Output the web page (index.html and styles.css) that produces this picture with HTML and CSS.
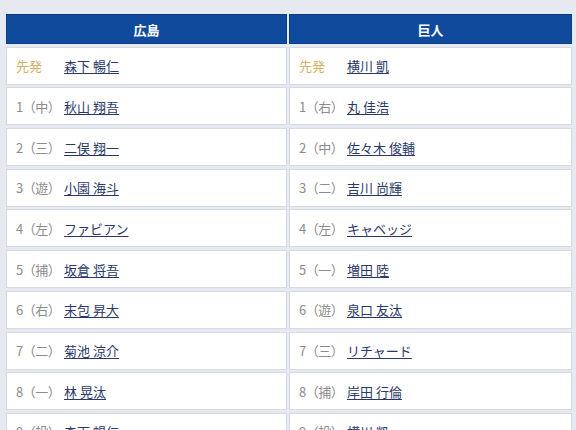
FILE: index.html
```html
<!DOCTYPE html>
<html lang="ja">
<head>
<meta charset="utf-8">
<link rel="stylesheet" href="styles.css">
</head>
<body>
<div class="lineup">
  <div class="head">広島</div><div class="head">巨人</div>

  <div class="cell"><span class="lbl starter">先発</span><a href="#">森下 暢仁</a></div>
  <div class="cell"><span class="lbl starter">先発</span><a href="#">横川 凱</a></div>

  <div class="cell"><span class="lbl">1（中）</span><a href="#">秋山 翔吾</a></div>
  <div class="cell"><span class="lbl">1（右）</span><a href="#">丸 佳浩</a></div>

  <div class="cell"><span class="lbl">2（三）</span><a href="#">二俣 翔一</a></div>
  <div class="cell"><span class="lbl">2（中）</span><a href="#">佐々木 俊輔</a></div>

  <div class="cell"><span class="lbl">3（遊）</span><a href="#">小園 海斗</a></div>
  <div class="cell"><span class="lbl">3（二）</span><a href="#">吉川 尚輝</a></div>

  <div class="cell"><span class="lbl">4（左）</span><a href="#">ファビアン</a></div>
  <div class="cell"><span class="lbl">4（左）</span><a href="#">キャベッジ</a></div>

  <div class="cell"><span class="lbl">5（捕）</span><a href="#">坂倉 将吾</a></div>
  <div class="cell"><span class="lbl">5（一）</span><a href="#">増田 陸</a></div>

  <div class="cell"><span class="lbl">6（右）</span><a href="#">末包 昇大</a></div>
  <div class="cell"><span class="lbl">6（遊）</span><a href="#">泉口 友汰</a></div>

  <div class="cell"><span class="lbl">7（二）</span><a href="#">菊池 涼介</a></div>
  <div class="cell"><span class="lbl">7（三）</span><a href="#">リチャード</a></div>

  <div class="cell"><span class="lbl">8（一）</span><a href="#">林 晃汰</a></div>
  <div class="cell"><span class="lbl">8（捕）</span><a href="#">岸田 行倫</a></div>

  <div class="cell"><span class="lbl">9（投）</span><a href="#">森下 暢仁</a></div>
  <div class="cell"><span class="lbl">9（投）</span><a href="#">横川 凱</a></div>
</div>
</body>
</html>
```
FILE: styles.css
```css
html, body {
  margin: 0;
  padding: 0;
  background: #e6e9f0;
}
body {
  padding: 14px 4px 0 6px;
  font-family: "Noto Sans CJK JP", "Noto Sans", sans-serif;
  font-size: 13px;
}
.lineup {
  display: grid;
  grid-template-columns: 281px 283px;
  grid-auto-rows: 38px;
  column-gap: 2px;
  row-gap: 2.7px;
}
.head {
  height: 30px;
  box-sizing: border-box;
  background: #104a9d;
  border: 1px solid #0b3d86;
  color: #fff;
  font-weight: bold;
  display: flex;
  align-items: center;
  justify-content: center;
}
.cell {
  box-sizing: border-box;
  background: #fff;
  border: 1px solid #d6dae4;
  padding: 0 0 0 9px;
  display: flex;
  align-items: center;
  white-space: nowrap;
}
.lineup > .head {
  align-self: start;
}
.lineup {
  grid-template-rows: 30px;
}
.lbl {
  display: inline-block;
  width: 48px;
  flex: none;
  color: #8c8c8c;
  letter-spacing: -0.5px;
}
.lbl.starter {
  color: #d2b066;
  letter-spacing: 0;
}
.lineup a {
  color: #2a3868;
  text-decoration: underline;
  text-underline-offset: 2px;
}
```
